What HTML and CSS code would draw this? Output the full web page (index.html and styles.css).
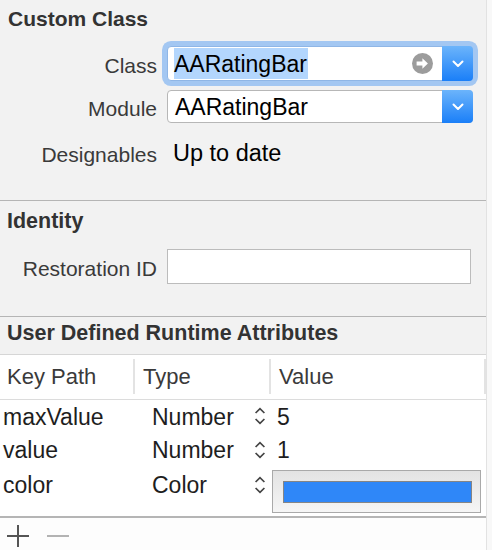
FILE: index.html
```html
<!DOCTYPE html>
<html>
<head>
<meta charset="utf-8">
<link rel="stylesheet" href="styles.css">
</head>
<body>
<div class="panel">
  <section class="sec sec-custom">
    <h2 class="sec-title title-custom">Custom Class</h2>
    <div class="row row-class">
      <span class="lbl">Class</span>
      <div class="combo focused">
        <div class="combo-text"><span class="sel">AARatingBar</span></div>
        <svg class="goto" width="21" height="21" viewBox="0 0 21 21"><circle cx="10.5" cy="10.5" r="10.5" fill="#9c9c9c"/><path d="M4.6 8.6H10.4V5.2L15.9 10.5L10.4 15.8V12.4H4.6Z" fill="#fff"/></svg>
        <div class="combo-btn"><svg width="12" height="8" viewBox="0 0 12 8"><polyline points="1.5,1.5 6,6 10.5,1.5" fill="none" stroke="#fff" stroke-width="2" stroke-linecap="round" stroke-linejoin="round"/></svg></div>
      </div>
    </div>
    <div class="row row-module">
      <span class="lbl">Module</span>
      <div class="combo combo-module">
        <div class="combo-text">AARatingBar</div>
        <div class="combo-btn"><svg width="12" height="8" viewBox="0 0 12 8"><polyline points="1.5,1.5 6,6 10.5,1.5" fill="none" stroke="#fff" stroke-width="2" stroke-linecap="round" stroke-linejoin="round"/></svg></div>
      </div>
    </div>
    <div class="row row-des">
      <span class="lbl">Designables</span>
      <span class="val">Up to date</span>
    </div>
  </section>

  <section class="sec sec-identity">
    <h2 class="sec-title title-identity">Identity</h2>
    <div class="row row-rest">
      <span class="lbl">Restoration ID</span>
      <div class="textfield"></div>
    </div>
  </section>

  <section class="sec-attrs">
    <h2 class="sec-title title-attrs">User Defined Runtime Attributes</h2>
    <div class="table">
      <div class="thead">
        <div class="th th-key">Key Path</div>
        <div class="th">Type</div>
        <div class="th">Value</div>
        <div class="th th-end"></div>
      </div>
      <div class="tbody">
        <div class="tr tr1">
          <div class="td td-key">maxValue</div>
          <div class="td td-type">Number<svg class="stepper" width="12" height="22" viewBox="0 0 12 22"><path d="M1.6 8L6 3.6L10.4 8M1.6 14L6 18.4L10.4 14" fill="none" stroke="#444" stroke-width="1.7"/></svg></div>
          <div class="td td-val">5</div>
        </div>
        <div class="tr tr2">
          <div class="td td-key">value</div>
          <div class="td td-type">Number<svg class="stepper" width="12" height="22" viewBox="0 0 12 22"><path d="M1.6 8L6 3.6L10.4 8M1.6 14L6 18.4L10.4 14" fill="none" stroke="#444" stroke-width="1.7"/></svg></div>
          <div class="td td-val">1</div>
        </div>
        <div class="tr tr3">
          <div class="td td-key">color</div>
          <div class="td td-type">Color<svg class="stepper" width="12" height="22" viewBox="0 0 12 22"><path d="M1.6 8L6 3.6L10.4 8M1.6 14L6 18.4L10.4 14" fill="none" stroke="#444" stroke-width="1.7"/></svg></div>
          <div class="td td-color"><div class="well"><div class="swatch"></div></div></div>
        </div>
      </div>
    </div>
    <div class="footer">
      <svg class="plus" width="22" height="22" viewBox="0 0 22 22"><path d="M11 0V22M0 11H22" stroke="#555" stroke-width="2"/></svg>
      <svg class="minus" width="22" height="22" viewBox="0 0 22 22"><path d="M0 11H22" stroke="#b3b3b3" stroke-width="2"/></svg>
    </div>
  </section>
</div>
</body>
</html>
```

FILE: styles.css
```css
* { box-sizing: border-box; margin: 0; padding: 0; }
html, body { margin: 0; }
body {
  width: 492px;
  height: 550px;
  overflow: hidden;
  background: #f8f8f8;
  font-family: "Liberation Sans", Arial, sans-serif;
}
.panel {
  width: 487px;
  height: 550px;
  background: #f2f2f2;
  border-right: 1px solid #e2e2e2;
  display: flex;
  flex-direction: column;
}
.sec { border-bottom: 1px solid #b5b5b5; flex: none; }
.sec-custom { height: 201px; }
.sec-identity { height: 116px; }
.sec-attrs { flex: 1; display: flex; flex-direction: column; }

.sec-title {
  font-size: 21.5px;
  font-weight: bold;
  color: #333;
  padding-left: 8px;
}
.title-custom { height: 38px; line-height: 38px; font-size: 21px; }
.title-identity { height: 40px; line-height: 40px; padding-left: 7px; }
.title-attrs { height: 32px; line-height: 32px; padding-left: 7px; }

.row { display: flex; align-items: center; }
.lbl {
  width: 157px;
  flex: none;
  text-align: right;
  font-size: 21px;
  color: #3a3a3a;
  padding-top: 4px;
}
.row-class { margin-top: 8px; height: 35px; }
.row-module { margin-top: 9px; height: 33px; }
.row-des { margin-top: 13px; height: 33px; }
.row-rest { margin-top: 8px; height: 35px; }
.row-rest .lbl { padding-top: 5px; }

.combo {
  margin-left: 10px;
  width: 306px;
  height: 100%;
  background: #fff;
  border: 1px solid #b7b7b7;
  border-radius: 4px;
  display: flex;
  align-items: center;
}
.focused {
  border-color: #8fb6e6;
  box-shadow: 0 0 0 5px #a3c7f2;
}
.combo-text {
  flex: 1;
  padding-left: 6px;
  padding-top: 1px;
  font-size: 23px;
  color: #000;
  white-space: nowrap;
}
.combo-module .combo-text { padding-left: 7px; }
.sel { background: #b3d6fd; padding: 3px 1px 2px 0; }
.goto { flex: none; margin-right: 9px; }
.combo-btn {
  flex: none;
  width: 31px;
  align-self: stretch;
  margin: -1px -1px -1px 0;
  background: linear-gradient(#6cb4fb, #1a7ff8);
  border-radius: 0 4px 4px 0;
  display: flex;
  align-items: center;
  justify-content: center;
}
.val { margin-left: 16px; font-size: 23.5px; color: #000; padding-top: 1px; }

.textfield {
  margin-left: 10px;
  width: 304px;
  height: 35px;
  background: #fff;
  border: 1px solid #bcbcbc;
}

.table {
  margin-top: 5px;
  background: #fff;
  border-top: 1px solid #d6d6d6;
  border-bottom: 2px solid #b5b5b5;
}
.thead {
  display: grid;
  grid-template-columns: 133px 136px 215px 2px;
  height: 45px;
  border-bottom: 1px solid #dcdcdc;
}
.th {
  margin: 4px 0 5px;
  font-size: 22px;
  color: #3a3a3a;
  display: flex;
  align-items: center;
  padding-left: 8px;
  border-left: 2px solid #e3e3e3;
}
.th-key { border-left: none; padding-left: 7px; }
.th-end { padding: 0; }

.tr {
  display: grid;
  grid-template-columns: 133px 136px 1fr;
  font-size: 23px;
  color: #1e1e1e;
}
.tr1 { height: 34px; line-height: 34px; }
.tr2 { height: 33px; line-height: 33px; }
.tr3 { height: 49px; line-height: 36px; }
.td-key { padding-left: 3px; }
.td-type {
  display: flex;
  justify-content: space-between;
  align-items: flex-start;
  padding-left: 19px;
  padding-right: 3px;
}
.stepper { flex: none; margin-top: 5px; }
.tr3 .stepper { margin-top: 7px; }
.td-val { padding-left: 8px; }
.td-color { padding-left: 3px; padding-top: 3px; }
.well {
  width: 209px;
  height: 43px;
  border: 1px solid #a9a9a9;
  background: linear-gradient(#e3e3e3, #f5f5f5);
  padding: 10px 0 0 10px;
}
.swatch {
  width: 189px;
  height: 22px;
  background: #2f87f8;
  border: 1px solid #858585;
}

.footer {
  flex: 1;
  background: #fdfdfd;
  display: flex;
  align-items: flex-start;
  padding: 7px 0 0 7px;
  gap: 18px;
}
```
